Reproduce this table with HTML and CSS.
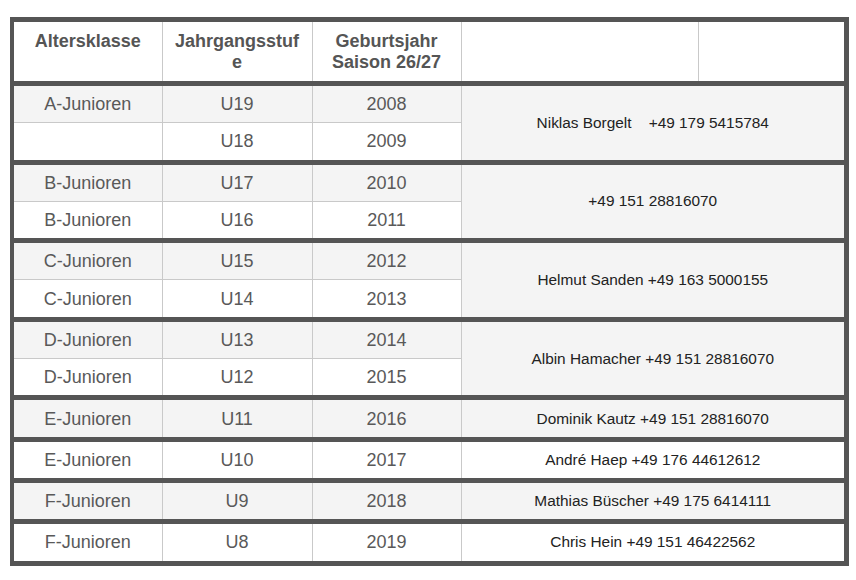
FILE: index.html
```html
<!DOCTYPE html>
<html lang="de">
<head>
<meta charset="utf-8">
<title>Altersklassen</title>
<link rel="stylesheet" href="styles.css">
</head>
<body>
<div class="frame">
<table class="grid">
<colgroup>
<col class="c1"><col class="c2"><col class="c3"><col class="c4"><col class="c5">
</colgroup>
<thead>
<tr><th>Altersklasse</th><th>Jahrgangsstufe</th><th>Geburtsjahr Saison 26/27</th><th></th><th></th></tr>
</thead>
<tbody>
<tr class="g"><td>A-Junioren</td><td>U19</td><td>2008</td><td class="contact" colspan="2" rowspan="2">Niklas Borgelt&nbsp;&nbsp;&nbsp; +49 179 5415784</td></tr>
<tr class="w"><td></td><td>U18</td><td>2009</td></tr>
</tbody>
<tbody>
<tr class="g"><td>B-Junioren</td><td>U17</td><td>2010</td><td class="contact" colspan="2" rowspan="2">+49 151 28816070</td></tr>
<tr class="w"><td>B-Junioren</td><td>U16</td><td>2011</td></tr>
</tbody>
<tbody>
<tr class="g"><td>C-Junioren</td><td>U15</td><td>2012</td><td class="contact" colspan="2" rowspan="2">Helmut Sanden +49 163 5000155</td></tr>
<tr class="w"><td>C-Junioren</td><td>U14</td><td>2013</td></tr>
</tbody>
<tbody>
<tr class="g"><td>D-Junioren</td><td>U13</td><td>2014</td><td class="contact" colspan="2" rowspan="2">Albin Hamacher +49 151 28816070</td></tr>
<tr class="w"><td>D-Junioren</td><td>U12</td><td>2015</td></tr>
</tbody>
<tbody>
<tr class="g"><td>E-Junioren</td><td>U11</td><td>2016</td><td class="contact" colspan="2">Dominik Kautz +49 151 28816070</td></tr>
</tbody>
<tbody>
<tr class="w"><td>E-Junioren</td><td>U10</td><td>2017</td><td class="contact" colspan="2">André Haep +49 176 44612612</td></tr>
</tbody>
<tbody>
<tr class="g"><td>F-Junioren</td><td>U9</td><td>2018</td><td class="contact" colspan="2">Mathias Büscher +49 175 6414111</td></tr>
</tbody>
<tbody>
<tr class="w"><td>F-Junioren</td><td>U8</td><td>2019</td><td class="contact" colspan="2">Chris Hein +49 151 46422562</td></tr>
</tbody>
</table>
</div>
</body>
</html>
```
FILE: styles.css
```css
html, body {
  margin: 0;
  background: #ffffff;
}
body {
  padding: 17px 7px 0 10px;
  font-family: "Liberation Sans", Arial, sans-serif;
}
.frame {
  border-style: solid;
  border-color: #555555;
  border-width: 5px 5px 5px 4px;
}
.grid {
  width: 100%;
  table-layout: fixed;
  border-collapse: collapse;
  border-style: hidden;
}
.c1 { width: 148px; }
.c2 { width: 150px; }
.c3 { width: 149px; }
.c4 { width: 237px; }
.grid th,
.grid td {
  border: 1px solid #c9c9c9;
  text-align: center;
  padding: 0 8px;
  overflow-wrap: anywhere;
}
.grid th {
  vertical-align: top;
  font-weight: bold;
  font-size: 18px;
  line-height: 21px;
  color: #555555;
  padding-top: 9px;
  padding-bottom: 8px;
  height: 42px;
}
.grid thead tr { background: #ffffff; }
.grid tbody { border-top: 5px solid #555555; }
.grid td {
  font-size: 18px;
  line-height: 20px;
  color: #595959;
  height: 36.3px;
  vertical-align: middle;
}
.grid td.contact {
  font-size: 15.4px;
  color: #222222;
}
.grid tr.g { background: #f4f4f4; }
.grid tr.w { background: #ffffff; }
```
